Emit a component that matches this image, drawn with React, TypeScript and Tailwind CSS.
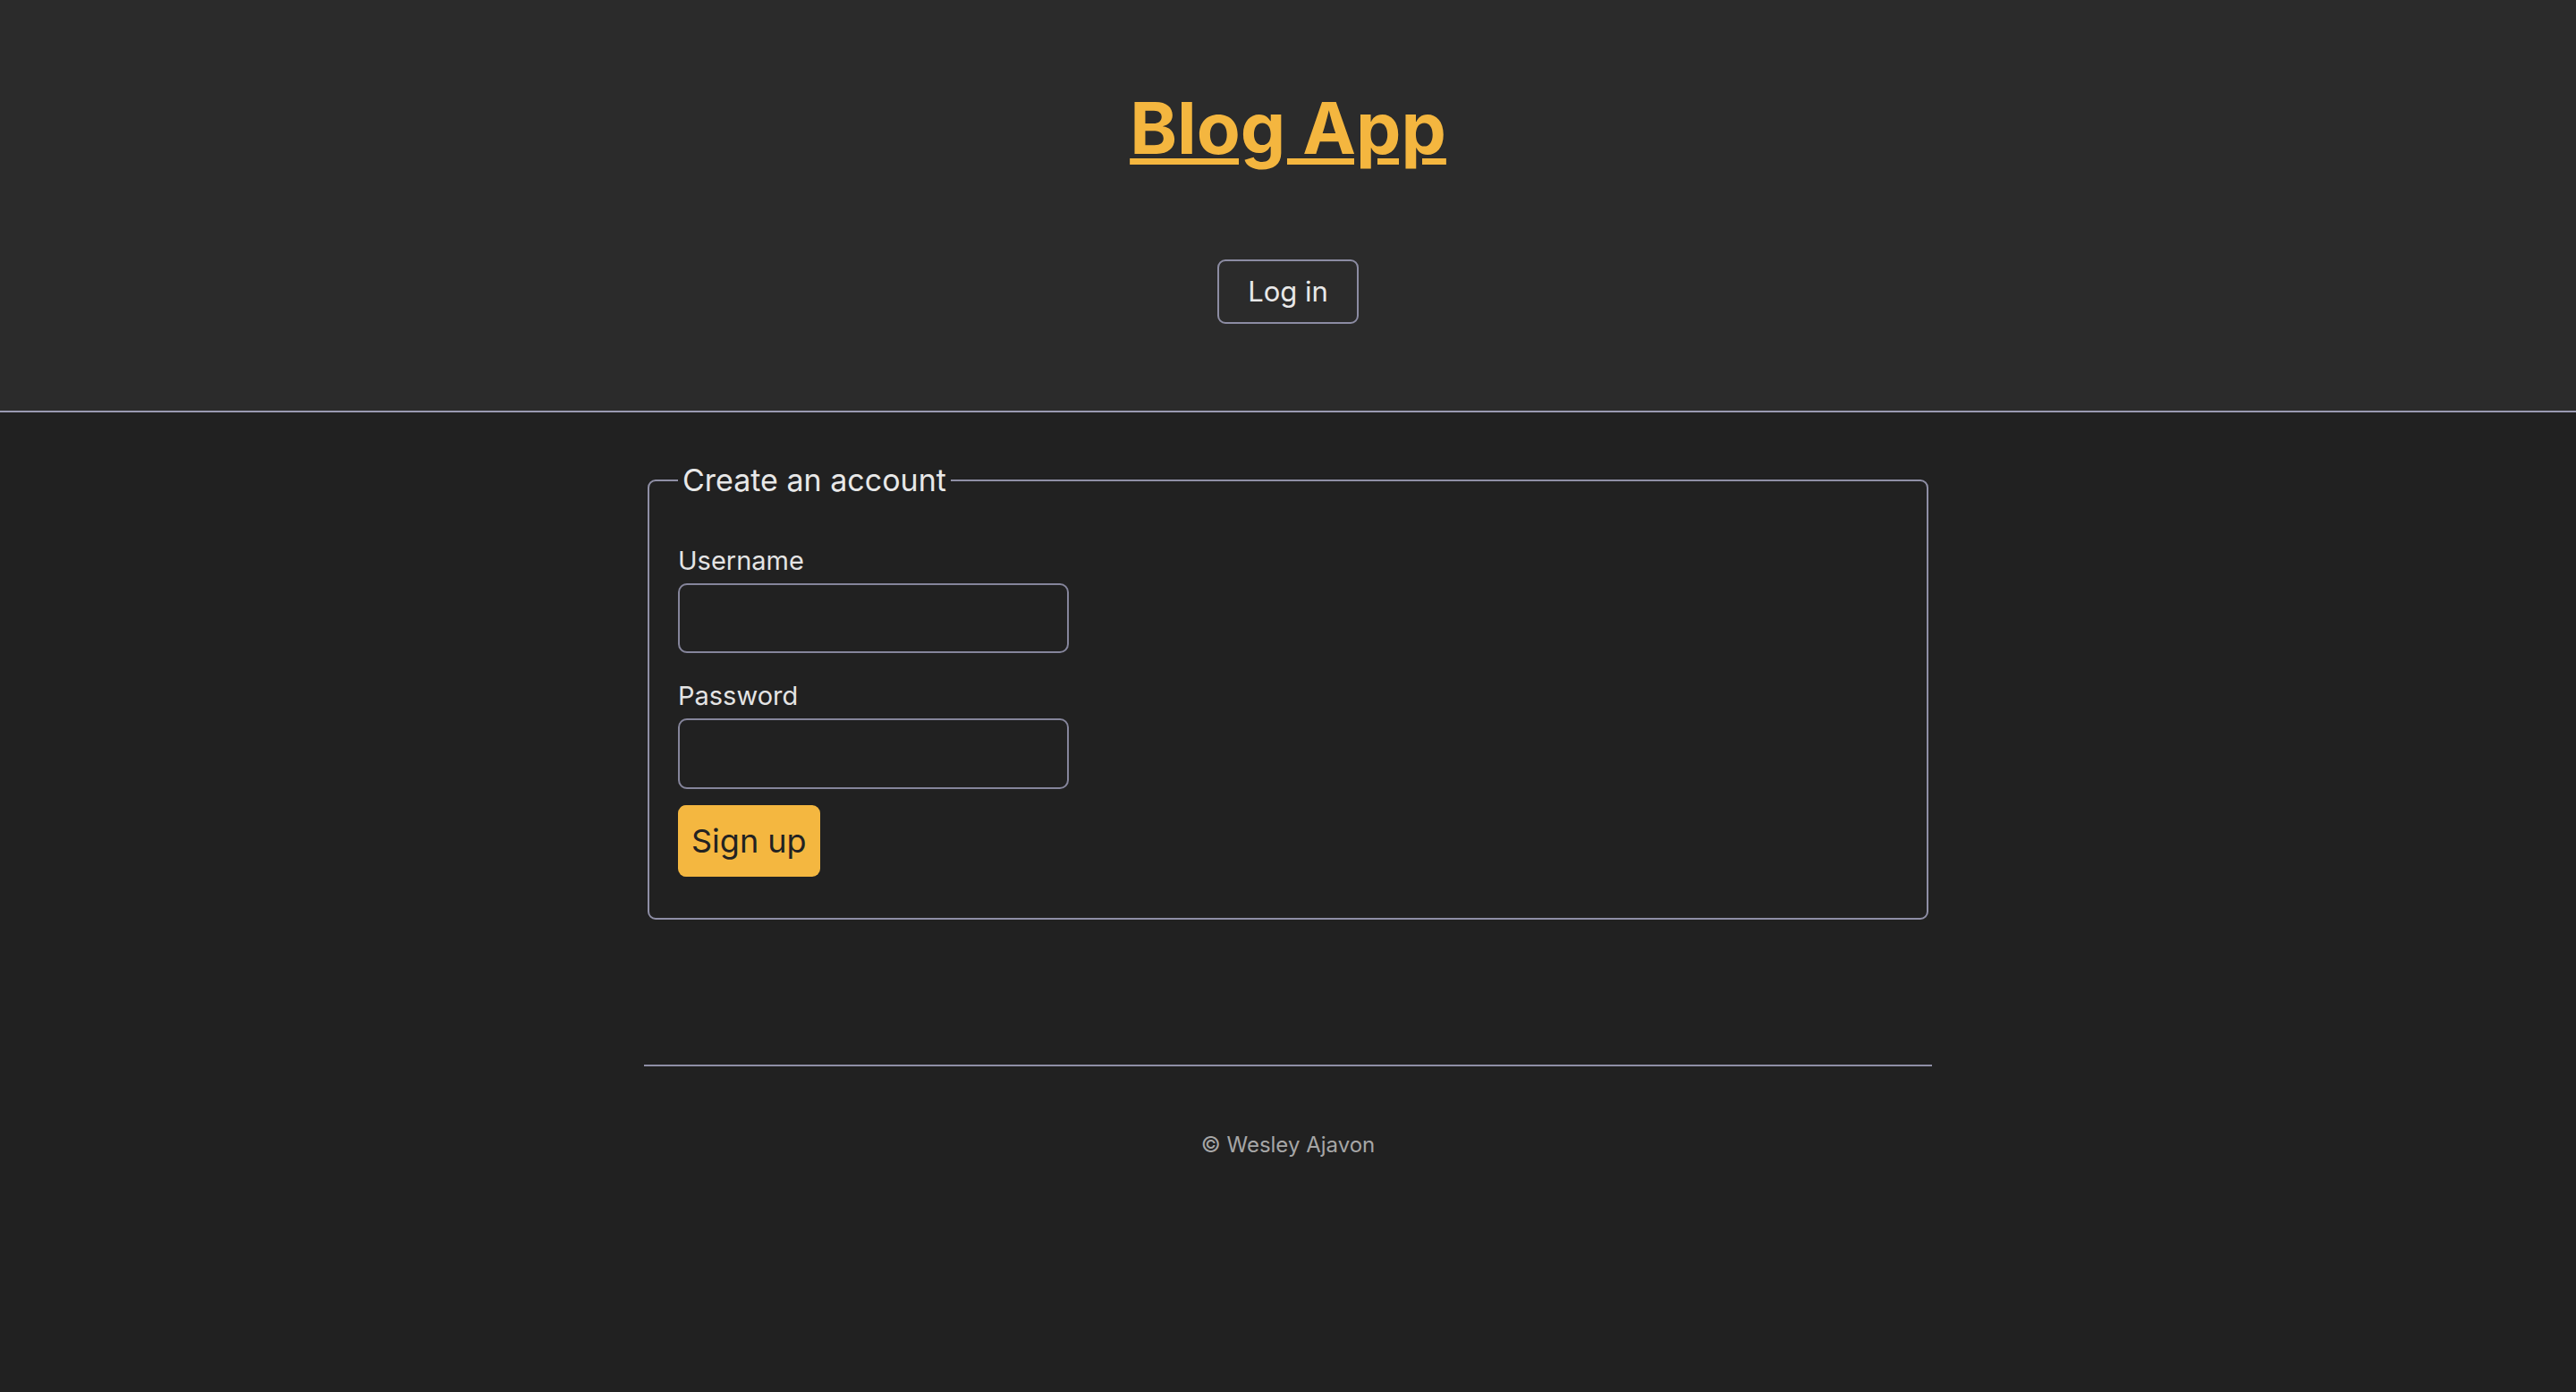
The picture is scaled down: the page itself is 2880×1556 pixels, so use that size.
import React from "react";

const App = () => {
  return (
    <div className="min-h-[1556px] w-full bg-[#212121] font-['Inter',sans-serif]">
      <header className="flex flex-col items-center bg-[#2b2b2b] pt-[95px] pb-[97px] border-b-2 border-[#9a9ab2]">
        <h1 className="m-0">
          <a
            href="#"
            className="text-[80px] leading-[96px] font-bold text-[#f4b63f] underline decoration-[7px] underline-offset-[5px]"
          >
            Blog App
          </a>
        </h1>
        <button className="mt-[99px] h-[72px] px-[32px] rounded-[9px] border-2 border-[#8c8ca3] bg-transparent text-[31px] text-[#e8e8e8]">
          Log in
        </button>
      </header>

      <main className="mx-auto w-[1440px] pt-[55px]">
        <fieldset className="mx-[4px] rounded-[9px] border-2 border-[#8f8fa6] px-[32px] pt-[52px] pb-[46px]">
          <legend className="px-[5px] text-[34px] leading-[41px] text-[#e8e8e8]">
            Create an account
          </legend>
          <form className="flex flex-col items-start">
            <label className="text-[29px] leading-[35px] text-[#e4e4e4]">Username</label>
            <input
              type="text"
              className="mt-[8px] h-[78px] w-[437px] rounded-[10px] border-2 border-[#85859b] bg-transparent text-[28px] text-white outline-none"
            />
            <label className="mt-[30px] text-[29px] leading-[35px] text-[#e4e4e4]">Password</label>
            <input
              type="password"
              className="mt-[8px] h-[79px] w-[437px] rounded-[10px] border-2 border-[#85859b] bg-transparent text-[28px] text-white outline-none"
            />
            <button
              type="button"
              className="mt-[18px] h-[80px] px-[15px] rounded-[9px] bg-[#f4b740] text-[36px] text-[#222222]"
            >
              Sign up
            </button>
          </form>
        </fieldset>

        <footer className="mt-[162px]">
          <hr className="border-0 h-[2px] bg-[#8f8fa6]" />
          <p className="mt-[73px] text-center text-[24px] leading-[29px] text-[#a6a6a6]">
            © Wesley Ajavon
          </p>
        </footer>
      </main>
    </div>
  );
};

export default App;
